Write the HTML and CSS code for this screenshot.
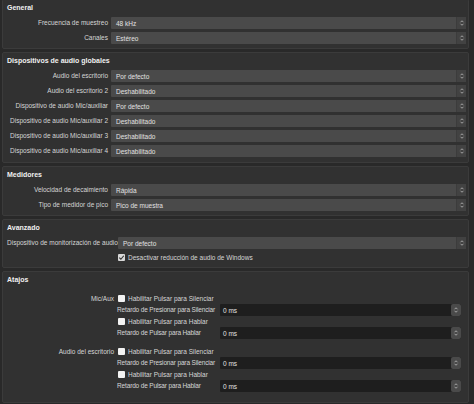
FILE: index.html
```html
<!DOCTYPE html>
<html lang="es">
<head>
<meta charset="utf-8">
<link rel="stylesheet" href="styles.css">
</head>
<body>
<div class="page">
  <section class="group g-general">
    <div class="title">General</div>
    <div class="form">
      <div class="label">Frecuencia de muestreo</div>
      <div class="combo"><span>48 kHz</span><i class="arr"><svg viewBox="0 0 8 10"><path d="M2 4 L4 2 L6 4 M2 6 L4 8 L6 6"/></svg></i></div>
      <div class="label">Canales</div>
      <div class="combo"><span>Estéreo</span><i class="arr"><svg viewBox="0 0 8 10"><path d="M2 4 L4 2 L6 4 M2 6 L4 8 L6 6"/></svg></i></div>
    </div>
  </section>

  <section class="group g-devices">
    <div class="title">Dispositivos de audio globales</div>
    <div class="form">
      <div class="label">Audio del escritorio</div>
      <div class="combo"><span>Por defecto</span><i class="arr"><svg viewBox="0 0 8 10"><path d="M2 4 L4 2 L6 4 M2 6 L4 8 L6 6"/></svg></i></div>
      <div class="label">Audio del escritorio 2</div>
      <div class="combo"><span>Deshabilitado</span><i class="arr"><svg viewBox="0 0 8 10"><path d="M2 4 L4 2 L6 4 M2 6 L4 8 L6 6"/></svg></i></div>
      <div class="label">Dispositivo de audio Mic/auxiliar</div>
      <div class="combo"><span>Por defecto</span><i class="arr"><svg viewBox="0 0 8 10"><path d="M2 4 L4 2 L6 4 M2 6 L4 8 L6 6"/></svg></i></div>
      <div class="label">Dispositivo de audio Mic/auxiliar 2</div>
      <div class="combo"><span>Deshabilitado</span><i class="arr"><svg viewBox="0 0 8 10"><path d="M2 4 L4 2 L6 4 M2 6 L4 8 L6 6"/></svg></i></div>
      <div class="label">Dispositivo de audio Mic/auxiliar 3</div>
      <div class="combo"><span>Deshabilitado</span><i class="arr"><svg viewBox="0 0 8 10"><path d="M2 4 L4 2 L6 4 M2 6 L4 8 L6 6"/></svg></i></div>
      <div class="label">Dispositivo de audio Mic/auxiliar 4</div>
      <div class="combo"><span>Deshabilitado</span><i class="arr"><svg viewBox="0 0 8 10"><path d="M2 4 L4 2 L6 4 M2 6 L4 8 L6 6"/></svg></i></div>
    </div>
  </section>

  <section class="group g-meters">
    <div class="title">Medidores</div>
    <div class="form">
      <div class="label">Velocidad de decaimiento</div>
      <div class="combo"><span>Rápida</span><i class="arr"><svg viewBox="0 0 8 10"><path d="M2 4 L4 2 L6 4 M2 6 L4 8 L6 6"/></svg></i></div>
      <div class="label">Tipo de medidor de pico</div>
      <div class="combo"><span>Pico de muestra</span><i class="arr"><svg viewBox="0 0 8 10"><path d="M2 4 L4 2 L6 4 M2 6 L4 8 L6 6"/></svg></i></div>
    </div>
  </section>

  <section class="group g-adv">
    <div class="title">Avanzado</div>
    <div class="form form-adv">
      <div class="label">Dispositivo de monitorización de audio</div>
      <div class="combo"><span>Por defecto</span><i class="arr"><svg viewBox="0 0 8 10"><path d="M2 4 L4 2 L6 4 M2 6 L4 8 L6 6"/></svg></i></div>
      <div></div>
      <label class="check"><span class="box checked"><svg viewBox="0 0 8 8"><path d="M1.5 4.2 L3.3 6 L6.6 2"/></svg></span>Desactivar reducción de audio de Windows</label>
    </div>
  </section>

  <section class="group g-hotkeys">
    <div class="title">Atajos</div>
    <div class="hk">
      <div class="hk-label">Mic/Aux</div>
      <div class="hk-body">
        <label class="check"><span class="box"></span>Habilitar Pulsar para Silenciar</label>
        <div class="hk-row"><div class="hk-sub">Retardo de Presionar para Silenciar</div><div class="spin"><span>0 ms</span><i class="arr"><svg viewBox="0 0 8 10"><path d="M2 4 L4 2 L6 4 M2 6 L4 8 L6 6"/></svg></i></div></div>
        <label class="check"><span class="box"></span>Habilitar Pulsar para Hablar</label>
        <div class="hk-row"><div class="hk-sub">Retardo de Pulsar para Hablar</div><div class="spin"><span>0 ms</span><i class="arr"><svg viewBox="0 0 8 10"><path d="M2 4 L4 2 L6 4 M2 6 L4 8 L6 6"/></svg></i></div></div>
      </div>
      <div class="hk-label">Audio del escritorio</div>
      <div class="hk-body">
        <label class="check"><span class="box"></span>Habilitar Pulsar para Silenciar</label>
        <div class="hk-row"><div class="hk-sub">Retardo de Presionar para Silenciar</div><div class="spin"><span>0 ms</span><i class="arr"><svg viewBox="0 0 8 10"><path d="M2 4 L4 2 L6 4 M2 6 L4 8 L6 6"/></svg></i></div></div>
        <label class="check"><span class="box"></span>Habilitar Pulsar para Hablar</label>
        <div class="hk-row"><div class="hk-sub">Retardo de Pulsar para Hablar</div><div class="spin"><span>0 ms</span><i class="arr"><svg viewBox="0 0 8 10"><path d="M2 4 L4 2 L6 4 M2 6 L4 8 L6 6"/></svg></i></div></div>
      </div>
    </div>
  </section>
</div>
</body>
</html>
```

FILE: styles.css
```css
html, body {
  margin: 0;
  padding: 0;
  background: #292929;
}
body {
  font-family: "Liberation Sans", Arial, sans-serif;
  font-size: 6.5px;
  color: #d6d6d6;
  width: 474px;
  height: 404px;
  overflow: hidden;
}
.page {
  display: flex;
  flex-direction: column;
  gap: 3px;
  padding: 0 5px 0 2px;
}
.group {
  background: #313131;
  border: 1px solid #3b3b3b;
  border-radius: 2px;
  padding: 2px 2px 4px 4px;
}
.g-general { margin-top: -1px; }
.g-devices { padding-bottom: 5px; }
.title {
  font-weight: bold;
  font-size: 7px;
  color: #f0f0f0;
  line-height: 12px;
  height: 12px;
  margin-bottom: 3px;
}
.form {
  display: grid;
  grid-template-columns: 101px 1fr;
  column-gap: 3px;
  row-gap: 3px;
  align-items: center;
}
.form-adv {
  grid-template-columns: 107px 1fr;
  column-gap: 4px;
  row-gap: 3px;
}
.g-adv { padding-bottom: 5px; }
.label {
  text-align: right;
  white-space: nowrap;
  line-height: 12px;
}
.combo, .spin {
  height: 12px;
  display: flex;
  align-items: center;
  background: #4a4a4a;
  border-radius: 1px;
}
.combo span, .spin span {
  flex: 1;
  padding-left: 5px;
  color: #e2e2e2;
  white-space: nowrap;
}
.arr {
  width: 9px;
  height: 12px;
  display: flex;
  align-items: center;
  justify-content: center;
  background: #424242;
  border-left: 1px solid #3c3c3c;
  border-radius: 0 2px 2px 0;
}
.arr svg {
  width: 6px;
  height: 8px;
  fill: none;
  stroke: #b8b8b8;
  stroke-width: 1.1;
}
.check {
  display: flex;
  align-items: center;
  gap: 3px;
  height: 10px;
  white-space: nowrap;
}
.box {
  width: 7px;
  height: 7px;
  background: #f2f2f2;
  border-radius: 1px;
  display: flex;
  align-items: center;
  justify-content: center;
}
.box svg {
  width: 7px;
  height: 7px;
  fill: none;
  stroke: #303030;
  stroke-width: 1.3;
}
.box.checked { background: #d8d8d8; }

.g-hotkeys {
  padding-bottom: 10px;
}
.hk {
  display: grid;
  grid-template-columns: 107px 1fr;
  column-gap: 3px;
  row-gap: 8px;
  padding-top: 5px;
}
.hk-label {
  text-align: right;
  line-height: 9px;
  white-space: nowrap;
}
.hk-body {
  display: flex;
  flex-direction: column;
  gap: 1px;
  padding-right: 5px;
}
.hk-body .check { height: 9px; padding-left: 1px; }
.hk-row {
  display: grid;
  grid-template-columns: 100px 1fr;
  column-gap: 3px;
  align-items: center;
}
.hk-sub {
  white-space: nowrap;
  line-height: 12px;
  letter-spacing: -0.15px;
}
.spin { background: #1e1e1e; }
.spin span { padding-left: 3px; }
.spin .arr { background: #4a4a4a; border-left: none; width: 10px; border-radius: 2px; }
```
